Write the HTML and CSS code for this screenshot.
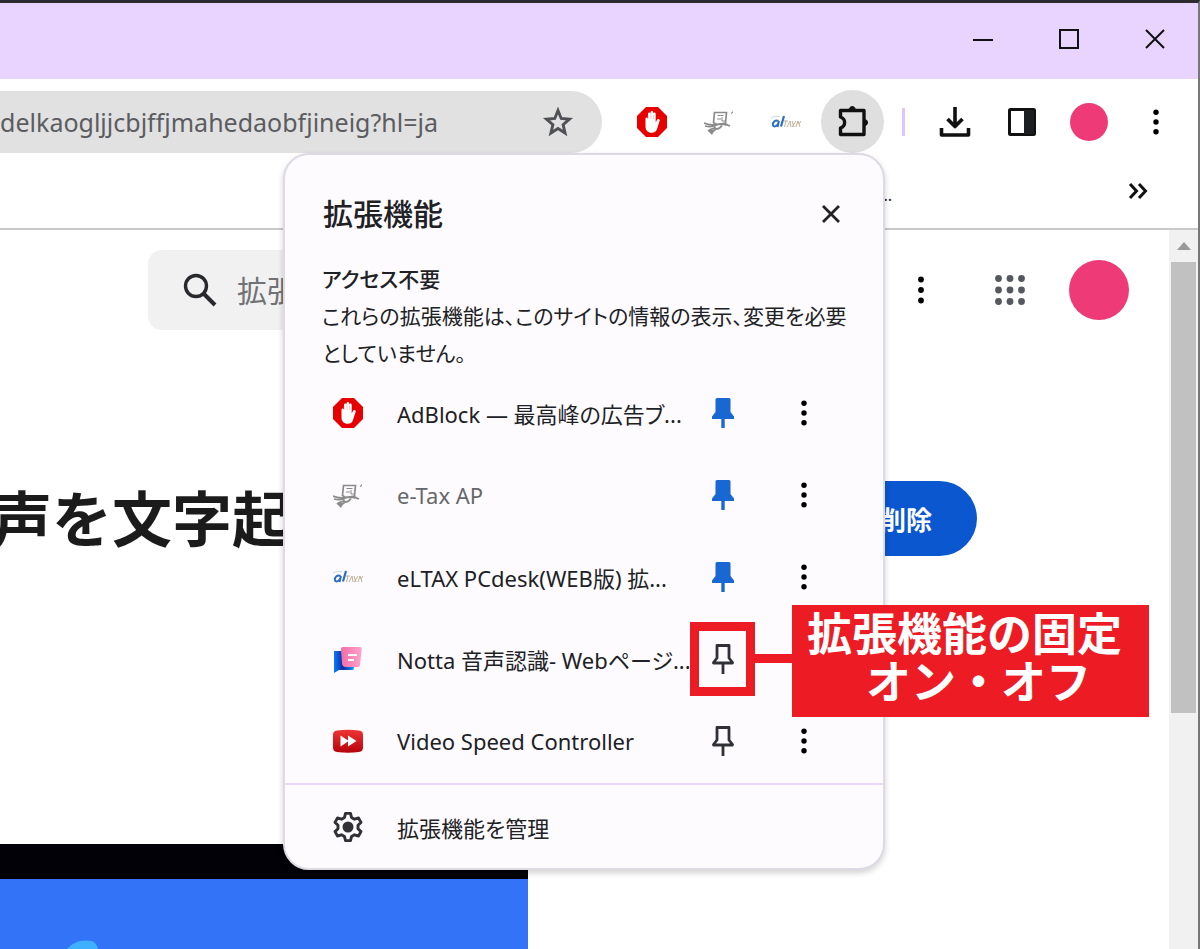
FILE: index.html
```html
<!DOCTYPE html>
<html lang="ja">
<head>
<meta charset="utf-8">
<meta name="viewport" content="width=device-width, initial-scale=1">
<title>拡張機能</title>
<link rel="stylesheet" href="styles.css">
</head>
<body>
<svg class="sprite" aria-hidden="true">
  <symbol id="dots" viewBox="0 0 30 30"><circle cx="15" cy="4.5" r="2.9"/><circle cx="15" cy="15" r="2.9"/><circle cx="15" cy="25.500" r="2.9"/></symbol>
  <symbol id="hand" viewBox="0 0 30 30"><path fill="#e60000" d="M9 0h12l9 9v12l-9 9H9l-9-9V9z"/><path fill="#fff" d="M8.500 12c0-2 2.300-2 2.500 0V7c0-2 2.500-2 2.500 0V5.500c0-2 2.700-2 2.700 0V7c0-2 2.500-2 2.500 0v8.500l1-2c1-2.300 3.600-1.700 2.900.5l-2.600 8c-.8 2.500-2.500 3.700-5 3.700-4.500 0-6.500-2.500-6.500-6.500z"/><path d="M11.200 12V8m2.700 4V6.500m2.600 5.500V8" stroke="#f7a0a0" stroke-width=".5"/></symbol>
  <symbol id="etax" viewBox="0 0 30 30"><g fill="none" stroke="#8b8b8b" stroke-width="1.700"><path d="M9.500 15.500 10.500 5.500h12l-1 10.500-9 1.500z"/><path d="M13.500 8.500h6M13 12h4m1-2v4h3" stroke-width="1"/><path d="M0 16c3 1.500 7 2.500 13 1.500s9-1 13 1.500M1 19c5 1 9 .5 12-1M9 18l3 4-5 4m-3-2c2-2 5-3 8-2 3 0 5-2 6-4"/></g><path fill="#8b8b8b" d="M4 24c1-2 5-2 6 0l-2 4zM27 6l2-2v2l-2 1zM20 16l4 1-3 2z"/></symbol>
  <symbol id="eltax" viewBox="0 0 30 30"><path d="M0 11c3-2 6-2 9-1" stroke="#c5d7e6" fill="none"/><path d="M7.500 14c-3-1.500-6 1-5.500 4 .5 2.500 3.500 1.500 5-1l1-3-1.500 6" fill="none" stroke="#2c6fbd" stroke-width="2"/><path d="m13 9-3 10.500" stroke="#2c6fbd" stroke-width="2.200"/><path d="M13 14h4m-2 0-1.500 6m2.500 0 3-6 1 6m1-6 2 6m2-6-4 6m4 0 2-6 1 3 2-3m-2 3 1 3" stroke="#c3b096" stroke-width="1" fill="none"/></symbol>
  <symbol id="pin" viewBox="0 0 30 32"><path d="M9 1h12q1.500 0 1.500 1.500V15l3.500 4.500V22H4v-2.500L7.500 15V2.500Q7.500 1 9 1z" fill="#1967d2"/><path d="M15 21v10" stroke="#1967d2" stroke-width="3.400"/></symbol>
  <symbol id="pin-off" viewBox="0 0 30 32"><path d="M9 2.500h12V15l3.500 4.500v.5h-19v-.5L9 15z" fill="none" stroke="#303136" stroke-width="2.800" stroke-linejoin="round"/><path d="M15 20v11" stroke="#303136" stroke-width="2.800"/></symbol>
</svg>

<div class="window">
  <header class="titlebar">
    <button class="caption" aria-label="最小化"><svg width="20" height="20" viewBox="0 0 20 20"><path d="M0 11h20"/></svg></button>
    <button class="caption" aria-label="最大化"><svg width="20" height="20" viewBox="0 0 20 20"><path d="M1 1h18v18H1z"/></svg></button>
    <button class="caption" aria-label="閉じる"><svg width="20" height="20" viewBox="0 0 20 20"><path d="m1 1 18 18M19 1 1 19"/></svg></button>
  </header>

  <div class="toolbar">
    <div class="omnibox">
      <span class="url">kdelkaogljjcbjffjmahedaobfjineig?hl=ja</span>
      <button class="star" aria-label="ブックマーク"><svg width="32" height="32" viewBox="0 0 32 32"><path d="m16 4.500 3.200 8 8.300.7-6.400 5.500 2 8.300-7.100-4.500L8.900 27l2-8.300-6.400-5.500 8.300-.7z" fill="none" stroke="#505155" stroke-width="2.900"/></svg></button>
    </div>
    <button class="tool" aria-label="AdBlock"><svg width="30" height="30"><use href="#hand"/></svg></button>
    <button class="tool" aria-label="e-Tax AP"><svg width="30" height="30"><use href="#etax"/></svg></button>
    <button class="tool" aria-label="eLTAX"><svg width="30" height="30"><use href="#eltax"/></svg></button>
    <button class="tool active" aria-label="拡張機能"><svg width="34" height="34" viewBox="0 0 34 34"><path d="M4.500 5.500H28v24H4.500V23c5.500-2 5.500-9 0-11z" fill="none" stroke="#111" stroke-width="3.400" stroke-linejoin="round"/><path d="M11.500 5c2-1 2-4 4.800-4s2.800 3 4.800 4zM28 12.500c1 2 4 2 4 5s-3 3-4 5z" fill="#111"/></svg></button>
    <span class="separator"></span>
    <button class="tool" aria-label="ダウンロード"><svg width="32" height="32" viewBox="0 0 32 32"><path d="M16 1v19M8.500 13l7.500 7.500 7.500-7.500M2.500 22v7h27v-7" fill="none" stroke="#111" stroke-width="3.600" stroke-linejoin="round"/></svg></button>
    <button class="tool" aria-label="サイドパネル"><svg width="28" height="28" viewBox="0 0 28 28"><rect x="1.500" y="1.500" width="25" height="25" rx="1" fill="#fff" stroke="#111" stroke-width="3"/><path fill="#1d1e21" d="M16 2h10v24H16z"/></svg></button>
    <button class="tool" aria-label="プロフィール"><span class="avatar"></span></button>
    <button class="tool" aria-label="メニュー"><svg width="28" height="28"><use href="#dots"/></svg></button>
  </div>

  <div class="bookmarks">
    <span class="clipped">...</span>
    <button class="more" aria-label="その他のブックマーク"><svg width="20" height="18" viewBox="0 0 20 18"><path d="m2 2 6.500 7L2 16m9-14 6.500 7-6.500 7" fill="none" stroke="#111" stroke-width="3"/></svg></button>
  </div>

  <div class="viewport">
    <main class="page">
      <div class="store-bar">
        <label class="search">
          <svg width="34" height="34" viewBox="0 0 34 34"><circle cx="13" cy="13" r="10.500" fill="none" stroke="#28292c" stroke-width="3.400"/><path d="m20.500 20.500 11.500 11.500" stroke="#28292c" stroke-width="4"/></svg>
          <input type="text" placeholder="拡張" aria-label="検索">
        </label>
        <button class="round" aria-label="その他"><svg width="30" height="30"><use href="#dots"/></svg></button>
        <button class="round" aria-label="アプリ"><svg width="32" height="32" viewBox="0 0 32 32"><g fill="#55585c"><circle cx="4.500" cy="4.500" r="3.400"/><circle cx="16" cy="4.500" r="3.400"/><circle cx="27.500" cy="4.500" r="3.400"/><circle cx="4.500" cy="16" r="3.400"/><circle cx="16" cy="16" r="3.400"/><circle cx="27.500" cy="16" r="3.400"/><circle cx="4.500" cy="27.500" r="3.400"/><circle cx="16" cy="27.500" r="3.400"/><circle cx="27.500" cy="27.500" r="3.400"/></g></svg></button>
        <button class="round avatar large" aria-label="アカウント"></button>
      </div>
      <div class="product">
        <h1>声を文字起</h1>
        <button class="remove">削除</button>
      </div>
      <div class="media"><div class="still"><svg width="60" height="40" viewBox="0 0 60 40"><path d="M0 10C6 3 14-1 26 1c5 2 7 8 6 14L20 40H0z" fill="#3fb0ff"/></svg></div></div>
    </main>
    <div class="scrollbar">
      <svg width="16" height="8" viewBox="0 0 16 8"><path d="m8 0 7 8H1z" fill="#999"/></svg>
      <div class="thumb"></div>
    </div>
  </div>

  <section class="popup" aria-labelledby="popup-title">
    <div class="popup-head">
      <h2 id="popup-title">拡張機能</h2>
      <button class="close" aria-label="閉じる"><svg width="20" height="20" viewBox="0 0 20 20"><path d="m2 2 16 16M18 2 2 18" stroke="#222" stroke-width="2.800"/></svg></button>
    </div>
    <div class="access">
      <h3>アクセス不要</h3>
      <p>これらの拡張機能は、このサイトの情報の表示、変更を必要<br>としていません。</p>
    </div>
    <ul class="list">
      <li>
        <svg width="30" height="30"><use href="#hand"/></svg><span class="name">AdBlock — 最高峰の広告ブ...</span>
        <button aria-label="固定を解除"><svg width="30" height="32"><use href="#pin"/></svg></button>
        <button aria-label="その他"><svg width="28" height="28"><use href="#dots"/></svg></button>
      </li>
      <li>
        <svg width="30" height="30"><use href="#etax"/></svg><span class="name muted">e-Tax AP</span>
        <button aria-label="固定を解除"><svg width="30" height="32"><use href="#pin"/></svg></button>
        <button aria-label="その他"><svg width="28" height="28"><use href="#dots"/></svg></button>
      </li>
      <li>
        <svg width="30" height="30"><use href="#eltax"/></svg><span class="name">eLTAX PCdesk(WEB版) 拡...</span>
        <button aria-label="固定を解除"><svg width="30" height="32"><use href="#pin"/></svg></button>
        <button aria-label="その他"><svg width="28" height="28"><use href="#dots"/></svg></button>
      </li>
      <li>
        <svg width="30" height="30" viewBox="0 0 30 30"><defs><linearGradient id="blue" x1="0" x2="1"><stop stop-color="#087bff"/><stop offset=".45" stop-color="#102a9c"/><stop offset="1" stop-color="#0a9cff"/></linearGradient><linearGradient id="pink"><stop stop-color="#f46ca8"/><stop offset="1" stop-color="#ffa3cb"/></linearGradient></defs><path fill="url(#blue)" d="M1 7h17l3 17q0 2-2 2H6l-5 3z"/><path fill="url(#pink)" d="M8 5q0-2 2-2h17q2 0 1.700 2L27 21q0 2-2 2H13q-4 0-4-4z"/><path d="M15 11h9m-9 5h6" stroke="#fff" stroke-width="2"/></svg><span class="name">Notta 音声認識- Webページ...</span>
        <button class="marked" aria-label="固定"><svg width="30" height="32"><use href="#pin-off"/></svg></button>
        <div class="callout"><span>拡張機能の固定</span><span class="second">オン・オフ</span></div>
      </li>
      <li>
        <svg width="30" height="30" viewBox="0 0 30 30"><defs><linearGradient id="red" x2="0" y2="1"><stop stop-color="#f03434"/><stop offset="1" stop-color="#b5040c"/></linearGradient></defs><path fill="url(#red)" d="M4 4.500q11-1.500 22 0 4 .5 4 4v13q0 4-4 4.500-11 1.500-22 0-4-.5-4-4.500v-13q0-3.500 4-4z"/><path fill="#fff" d="m7.500 9.500 7.500 5v-5l8.500 5.500-8.500 5.500v-5l-7.500 5z"/></svg><span class="name">Video Speed Controller</span>
        <button aria-label="固定"><svg width="30" height="32"><use href="#pin-off"/></svg></button>
        <button aria-label="その他"><svg width="28" height="28"><use href="#dots"/></svg></button>
      </li>
    </ul>
    <button class="manage">
      <svg width="30" height="32" viewBox="0 0 30 32"><path d="M12.500 2.400h5l1 4 3 1.800 4-1.200 2.500 4.400-3 2.900v3.400l3 2.900-2.500 4.400-4-1.200-3 1.800-1 4h-5l-1-4-3-1.800-4 1.200L2 20.600l3-2.900v-3.400l-3-2.900L4.500 7l4 1.200 3-1.800z" fill="none" stroke="#303136" stroke-width="2.900" stroke-linejoin="round"/><circle cx="15" cy="16" r="5.500" fill="#303136"/></svg>
      <span>拡張機能を管理</span>
    </button>
  </section>
</div>
</body>
</html>
```
FILE: styles.css
```css
* { box-sizing: border-box; }

body {
  margin: 0;
  font-family: "Noto Sans", "Noto Sans CJK JP", sans-serif;
  font-size: 22px;
  color: #202124;
}

button {
  display: flex;
  align-items: center;
  justify-content: center;
  padding: 0;
  border: 0;
  background: none;
  font: inherit;
  color: inherit;
}

h1, h2, h3, p, ul { margin: 0; padding: 0; }
svg { display: block; flex: none; }
.sprite { position: absolute; width: 0; height: 0; }

.window {
  position: relative;
  display: flex;
  flex-direction: column;
  height: 100vh;
  overflow: hidden;
  border-top: 3px solid #2b2b30;
  border-right: 2px solid #77777a;
  background: #fff;
}

.titlebar {
  display: flex;
  flex: none;
  justify-content: flex-end;
  height: 76px;
  background: #e8d4ff;
}

.caption { width: 86px; height: 72px; }
.caption svg { fill: none; stroke: #111; stroke-width: 2; }

.toolbar {
  display: flex;
  flex: none;
  align-items: center;
  gap: 4px;
  padding: 11px 11px 0 0;
}

.omnibox {
  display: flex;
  flex: 1;
  align-items: center;
  justify-content: flex-end;
  gap: 104px;
  min-width: 0;
  height: 62px;
  margin-right: 14px;
  padding-right: 28px;
  overflow: hidden;
  border-radius: 0 31px 31px 0;
  background: #e1e1e2;
}

.url { font-size: 25px; color: #5b5c5f; white-space: nowrap; }

.tool {
  flex: none;
  width: 63px;
  height: 63px;
  border-radius: 50%;
}

.tool.active { background: #dfdfe0; }

.separator {
  flex: none;
  width: 3px;
  height: 28px;
  margin: 0 14px;
  background: #dfc5ff;
}

.avatar {
  width: 38px;
  height: 38px;
  border-radius: 50%;
  background: #ee3b78;
}

.bookmarks {
  display: flex;
  flex: none;
  align-items: center;
  justify-content: flex-end;
  gap: 236px;
  height: 77px;
  padding-right: 50px;
  border-bottom: 2px solid #c9c9cb;
}

.clipped { padding-top: 8px; font-size: 16px; }

.viewport { display: flex; flex: 1; min-height: 0; }

.page {
  flex: 1;
  min-width: 0;
  overflow: hidden;
  padding-top: 20px;
}

.store-bar {
  display: flex;
  align-items: center;
  gap: 29px;
  padding: 0 40px 0 148px;
}

.search {
  display: flex;
  flex: 1;
  align-items: center;
  gap: 20px;
  height: 80px;
  padding: 0 35px;
  border-radius: 14px;
  background: #f1f1f1;
}

.search input {
  width: 100%;
  padding: 0;
  border: 0;
  background: none;
  font: inherit;
  font-size: 30px;
}

.search input::placeholder { color: #707275; opacity: 1; }
.round { flex: none; width: 60px; height: 60px; }
.round.avatar.large { border-radius: 50%; background: #ee3b78; }

.product {
  display: flex;
  align-items: center;
  justify-content: space-between;
  margin-top: 151px;
  padding-right: 192px;
}

h1 {
  margin-left: -8px;
  font-size: 60px;
  line-height: 72px;
  font-weight: 700;
  color: #1b1b1b;
}

.remove {
  height: 75px;
  padding: 0 45px;
  border-radius: 38px;
  background: #0b57d0;
  color: #fff;
  font-size: 26px;
  font-weight: 700;
}

.media {
  width: 528px;
  margin-top: 288px;
  padding-top: 35px;
  background: #020107;
}

.still {
  height: 400px;
  padding: 61px 0 0 66px;
  background: #3373f8;
}

.scrollbar {
  display: flex;
  flex: none;
  flex-direction: column;
  align-items: center;
  gap: 12px;
  width: 29px;
  padding-top: 12px;
  background: #f1f1f1;
}

.thumb { width: 25px; height: 451px; background: #c1c1c1; }

.popup {
  position: absolute;
  top: 150px;
  right: 313px;
  width: 602px;
  border: 2px solid #dedae3;
  border-radius: 26px;
  background: #fefbff;
  box-shadow: 0 3px 6px rgba(0, 0, 0, .18);
  font-feature-settings: "palt";
}

.popup-head {
  display: flex;
  align-items: center;
  justify-content: space-between;
  padding: 37px 42px 0 38px;
}

h2 { font-size: 30px; line-height: 44px; font-weight: 500; }
.close { width: 20px; height: 40px; }

.access { padding: 25px 36px 0 37px; font-size: 21px; line-height: 37px; }
h3 { font-size: 21px; font-weight: 500; }
.access p { white-space: nowrap; }

.list {
  list-style: none;
  padding-bottom: 1px;
  border-bottom: 2px solid #ead8fc;
}

.list li {
  position: relative;
  display: grid;
  grid-template-columns: 30px 1fr 65px 64px;
  align-items: center;
  height: 82px;
  padding: 0 47px 0 48px;
}

.name { min-width: 0; padding-left: 34px; white-space: nowrap; }
.name.muted { color: #66676b; }
.list button { height: 74px; }
.list button:nth-of-type(1) { margin: 0 17px 0 -17px; }

.list .marked { position: relative; }

/* frame drawn round the pin button */
.marked::before {
  content: "";
  position: absolute;
  inset: 0;
  border: 9px solid #ed1c24;
}

.callout {
  position: absolute;
  top: -13px;
  left: 507px;
  z-index: 1;
  padding: 5px 27px 11px 15px;
  background: #ed1c24;
  color: #fff;
  font-size: 45px;
  line-height: 48px;
  font-weight: 700;
  font-feature-settings: normal;
  text-align: center;
  white-space: nowrap;
}

.callout span { display: block; }
.callout .second { padding-left: 28px; }

/* connector from the frame to the label */
.callout::before {
  content: "";
  position: absolute;
  top: 49px;
  right: 100%;
  width: 38px;
  height: 9px;
  background: #ed1c24;
}

.manage {
  justify-content: flex-start;
  gap: 34px;
  width: 100%;
  height: 83px;
  padding-left: 48px;
}
```
